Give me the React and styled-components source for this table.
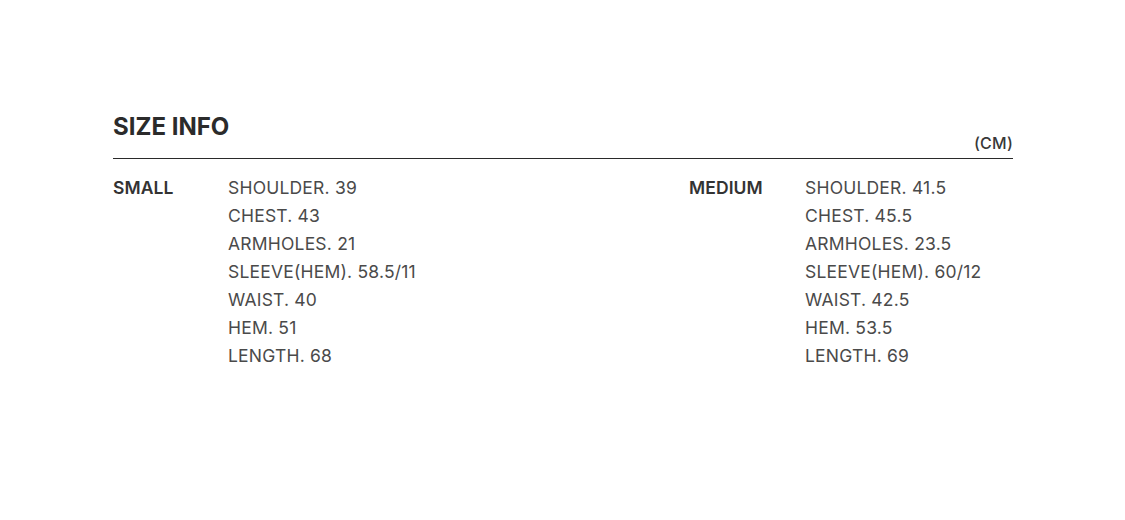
import React from 'react';
import styled, { createGlobalStyle } from 'styled-components';

const GlobalStyle = createGlobalStyle`
    html, body {
        margin: 0;
        padding: 0;
        background: #fff;
    }
    body {
        font-family: Inter, "Liberation Sans", sans-serif;
        -webkit-font-smoothing: antialiased;
    }
`;

const StyledPage = styled.div`
    width: 1125px;
    height: 520px;
    padding: 113px 112px 0 113px;
    box-sizing: border-box;
`;
const StyledHeader = styled.div`
    display: flex;
    justify-content: space-between;
    align-items: flex-end;
    padding-bottom: 5px;
    border-bottom: 1px solid #2a2a2a;
`;
const StyledHeader__Title = styled.h2`
    margin: 0;
    font-size: 24px;
    font-weight: 700;
    letter-spacing: 0;
    color: #2b2b2b;
    line-height: 26px;
    padding-top: 1px;
    padding-bottom: 13px;
`;
const StyledHeader__Unit = styled.span`
    font-size: 16px;
    font-weight: 500;
    letter-spacing: 0.2px;
    color: #383838;
    line-height: 18px;
    padding-bottom: 1px;
`;
const StyledSizes = styled.div`
    display: grid;
    grid-template-columns: 576px 1fr;
    padding-top: 15px;
`;
const StyledSize = styled.div`
    display: grid;
    grid-template-columns: ${props => props.labelWidth}px 1fr;
`;
const StyledSize__Label = styled.div`
    font-size: 17.5px;
    font-weight: 600;
    letter-spacing: 0.1px;
    color: #333;
    line-height: 28px;
`;
const StyledSize__List = styled.ul`
    margin: 0;
    padding: 0;
    list-style: none;
`;
const StyledSize__Item = styled.li`
    font-size: 17.5px;
    font-weight: 400;
    color: #4a4a4a;
    line-height: 28px;
    letter-spacing: 0.2px;
`;

const sizes = [
    {
        name: 'SMALL',
        labelWidth: 115,
        specs: ['SHOULDER. 39', 'CHEST. 43', 'ARMHOLES. 21', 'SLEEVE(HEM). 58.5/11', 'WAIST. 40', 'HEM. 51', 'LENGTH. 68'],
    },
    {
        name: 'MEDIUM',
        labelWidth: 116,
        specs: ['SHOULDER. 41.5', 'CHEST. 45.5', 'ARMHOLES. 23.5', 'SLEEVE(HEM). 60/12', 'WAIST. 42.5', 'HEM. 53.5', 'LENGTH. 69'],
    },
];

function App () {
    return (
        <>
            <GlobalStyle />
            <StyledPage>
                <StyledHeader>
                    <StyledHeader__Title>SIZE INFO</StyledHeader__Title>
                    <StyledHeader__Unit>(CM)</StyledHeader__Unit>
                </StyledHeader>
                <StyledSizes>
                    {sizes.map(size => (
                        <StyledSize key={size.name} labelWidth={size.labelWidth}>
                            <StyledSize__Label>{size.name}</StyledSize__Label>
                            <StyledSize__List>
                                {size.specs.map(spec => (<StyledSize__Item key={spec}>{spec}</StyledSize__Item>))}
                            </StyledSize__List>
                        </StyledSize>
                    ))}
                </StyledSizes>
            </StyledPage>
        </>
    );
}

export default App;
